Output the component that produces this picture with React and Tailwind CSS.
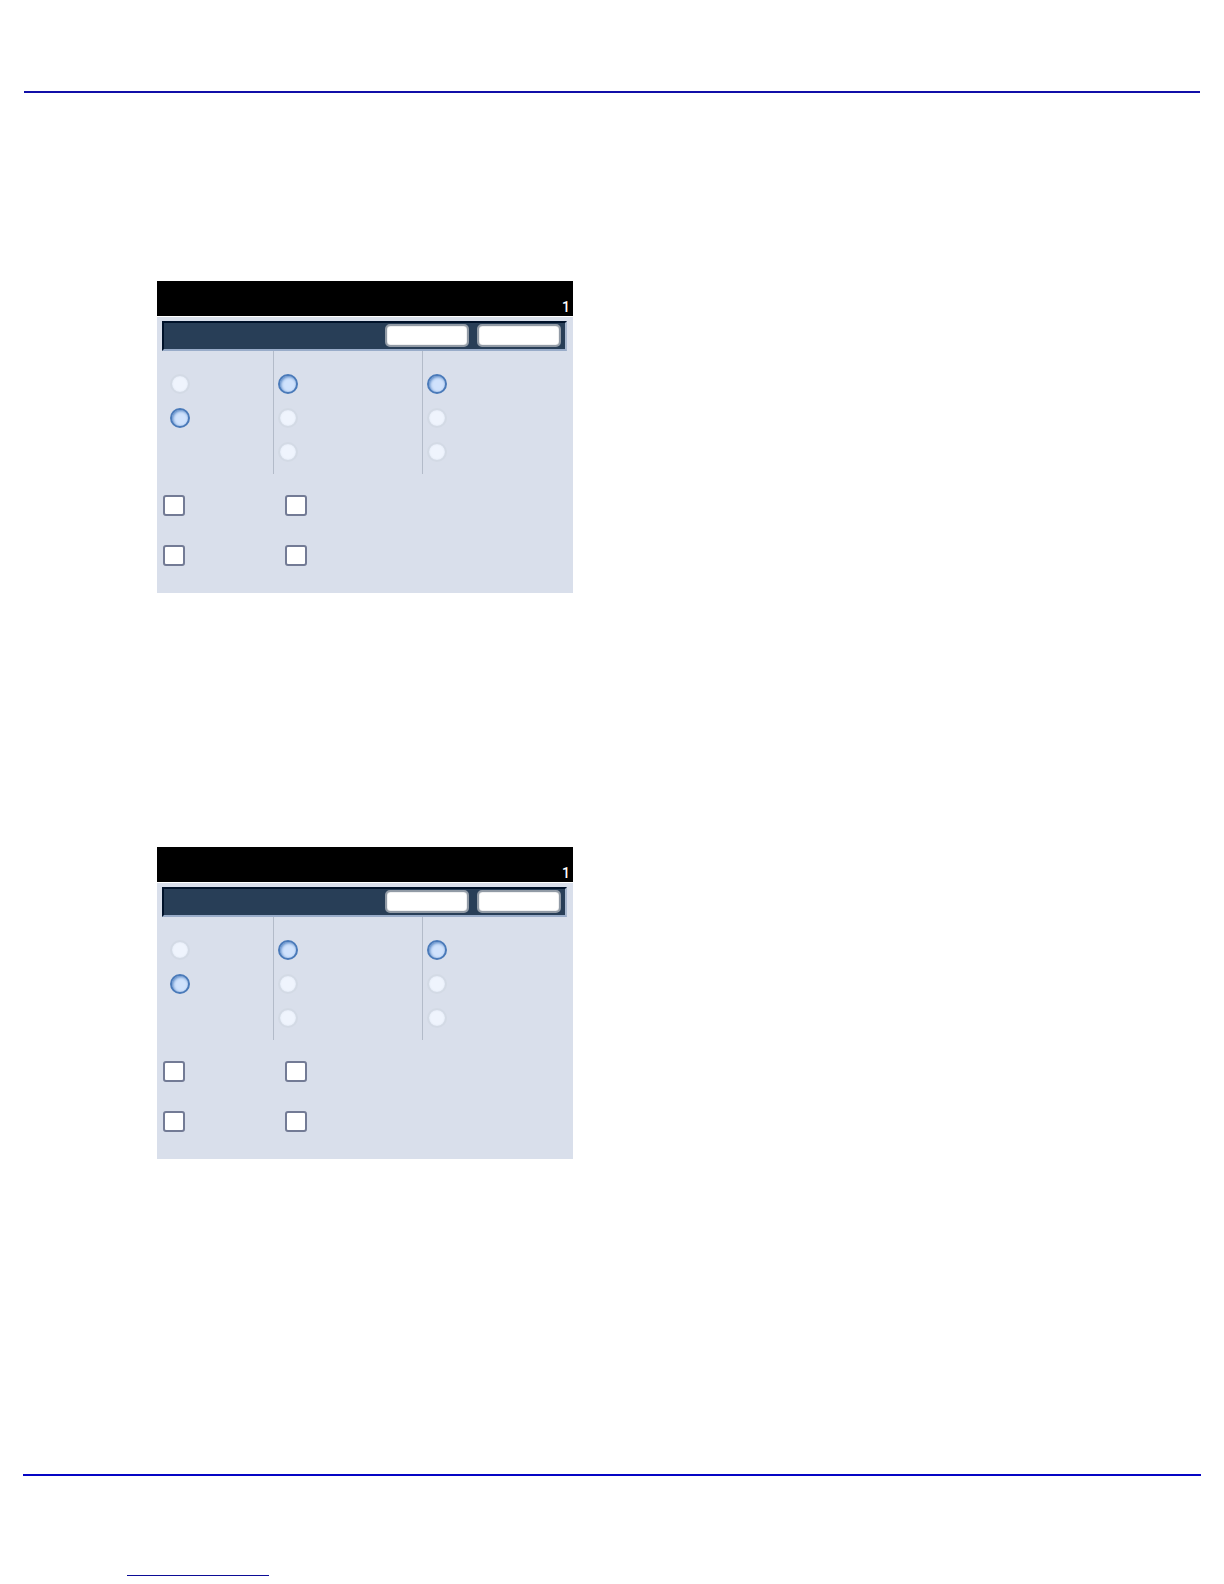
import React, { useId, useState } from "react";
import clsx from "clsx";

const groups = [
  { id: "output", label: "Output", options: ["Option 1", "Option 2"], selected: 1 },
  { id: "source", label: "Source", options: ["Option 1", "Option 2", "Option 3"], selected: 0 },
  { id: "quality", label: "Quality", options: ["Option 1", "Option 2", "Option 3"], selected: 0 },
];

const extras = ["Extra 1", "Extra 2", "Extra 3", "Extra 4"];

const Radio = ({ name, label, checked, onChange }) => (
  <input
    type="radio"
    name={name}
    aria-label={label}
    checked={checked}
    onChange={onChange}
    className="block size-5 appearance-none rounded-full border-2 border-[#d3dae5] bg-[#eff4fd] bg-clip-padding shadow-[inset_0_0_2px_#d9e1ed] checked:border-[#4a7ab9] checked:bg-[#d0e2fc] checked:bg-clip-border checked:shadow-[inset_1px_1px_3px_#5585c4]"
  />
);

const RadioGroup = ({ group, divided }) => {
  const name = useId();
  const [selected, setSelected] = useState(group.selected);

  return (
    <fieldset
      aria-label={group.label}
      className={clsx(
        "flex h-[123px] flex-col gap-[14px] pt-[23px]",
        divided ? "border-l border-[#b3bbc9] pl-1" : "pl-[13px]"
      )}
    >
      {group.options.map((option, i) => (
        <Radio
          key={option}
          name={name}
          label={option}
          checked={selected === i}
          onChange={() => setSelected(i)}
        />
      ))}
    </fieldset>
  );
};

const BarButton = ({ label }) => (
  <button
    type="button"
    aria-label={label}
    className="h-[23px] w-[84px] rounded-[5px] border-2 border-[#929ba6] bg-white shadow-[inset_0_0_1px_#59636f]"
  />
);

const Panel = () => (
  <section className="w-full max-w-[416px] bg-[#d9dfeb]">
    <div className="flex h-9 items-end justify-end border-b border-white bg-black pr-[3px] pb-px font-[Roboto,sans-serif] text-sm leading-4 font-medium text-white">
      1
    </div>
    <div className="pt-1 pr-[6px] pl-[5px]">
      <div className="flex h-[30px] items-start justify-end gap-2 border-2 border-t-[#00122a] border-r-[#a9b8cf] border-b-[#99acc9] border-l-[#00122a] bg-[#283e57] pt-px pr-1">
        <BarButton label="Cancel" />
        <BarButton label="Save" />
      </div>
    </div>
    <div className="grid grid-cols-[116px_149px_1fr]">
      {groups.map((group, i) => (
        <RadioGroup key={group.id} group={group} divided={i > 0} />
      ))}
    </div>
    <div className="grid grid-cols-[122px_1fr] gap-y-[29px] pt-[21px] pb-[27px] pl-[6px]">
      {extras.map((label) => (
        <input
          key={label}
          type="checkbox"
          aria-label={label}
          className="block h-[21px] w-[22px] appearance-none rounded-[3px] border-2 border-[#737b95] bg-white checked:bg-[#4a7ab9]"
        />
      ))}
    </div>
  </section>
);

const App = () => {
  return (
    <div className="flex min-h-screen flex-col bg-white font-['Liberation_Sans',sans-serif]">
      <header className="mx-6 h-[93px] border-b-2 border-[#110fa8]" />
      <main className="flex flex-1 flex-col gap-[254px] pt-[188px] pl-[157px]">
        <Panel />
        <Panel />
      </main>
      <footer className="mx-[23px] h-[110px] border-t-2 border-[#0505c4] pl-[104px]">
        <a
          href="#contents"
          aria-label="Contents"
          className="mt-[78px] block h-[22px] w-[142px] border-b border-[#0c0c96]"
        />
      </footer>
    </div>
  );
};

export default App;
